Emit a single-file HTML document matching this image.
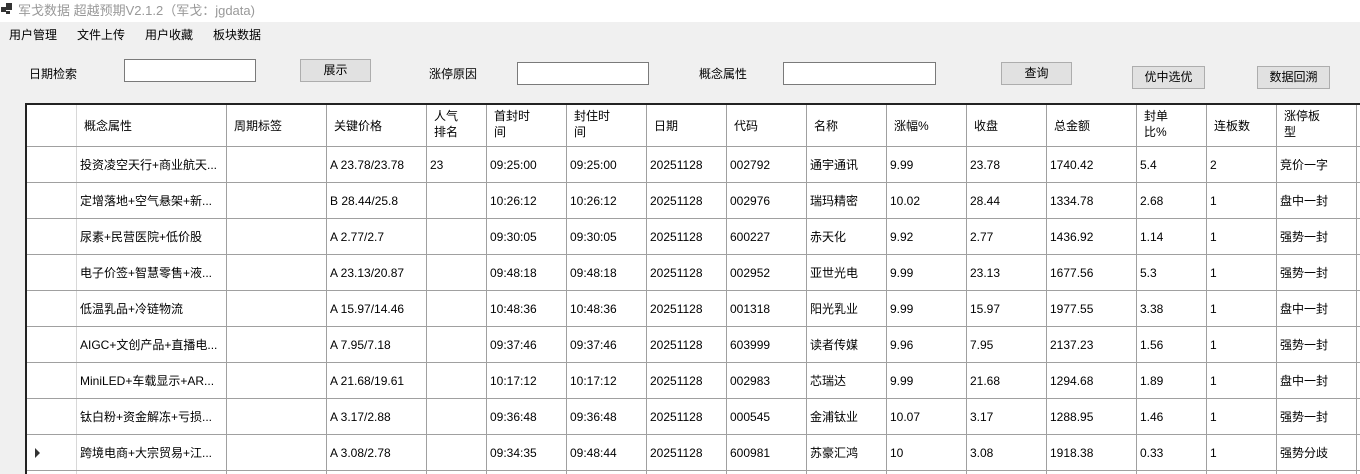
<!DOCTYPE html><html><head><meta charset="utf-8"><style>
*{margin:0;padding:0;box-sizing:border-box}
body{width:1360px;height:474px;overflow:hidden;background:#f0f0f0;font-family:"Liberation Sans","Noto Sans CJK SC",sans-serif;font-size:12px;color:#000;position:relative;line-height:16px}
.a{position:absolute;white-space:nowrap}
.tb{left:0;top:0;width:1360px;height:22px;background:#fff}
.in{background:#fff;border:1px solid #7a7a7a;height:23px}
.bt{background:#e1e1e1;border:1px solid #adadad;height:23px;text-align:center;line-height:21px}
.grid{left:25px;top:103px;width:1335px;height:371px;background:#fff;border-left:2px solid #222;border-top:2px solid #222;overflow:hidden}
.v{position:absolute;top:0;width:1px;height:371px;background:#a0a0a0}
.c{position:absolute;white-space:nowrap;font-size:12px;line-height:16px}
</style></head><body>
<div class="a tb"></div>
<div class="a" style="left:1px;top:7px;width:5px;height:5px;background:#333"></div>
<div class="a" style="left:6px;top:3px;width:6px;height:7px;background:#333"></div>
<div class="a" style="left:6px;top:11px;width:4px;height:3px;background:#333"></div>
<div class="a" style="left:18px;top:3px;color:#999;font-size:13px">军戈数据 超越预期V2.1.2（军戈：jgdata)</div>
<div class="a" style="left:9px;top:27px">用户管理</div>
<div class="a" style="left:77px;top:27px">文件上传</div>
<div class="a" style="left:145px;top:27px">用户收藏</div>
<div class="a" style="left:213px;top:27px">板块数据</div>
<div class="a" style="left:29px;top:66px">日期检索</div>
<div class="a in" style="left:124px;top:59px;width:132px"></div>
<div class="a bt" style="left:300px;top:59px;width:71px">展示</div>
<div class="a" style="left:429px;top:66px">涨停原因</div>
<div class="a in" style="left:517px;top:62px;width:132px"></div>
<div class="a" style="left:699px;top:66px">概念属性</div>
<div class="a in" style="left:783px;top:62px;width:153px"></div>
<div class="a bt" style="left:1001px;top:62px;width:71px">查询</div>
<div class="a bt" style="left:1132px;top:66px;width:73px">优中选优</div>
<div class="a bt" style="left:1257px;top:66px;width:73px">数据回溯</div>
<div class="a grid" id="g"></div>
<script>
var xs=[76,226,326,426,486,566,646,726,806,886,966,1046,1136,1206,1276,1356];
var hd=["概念属性","周期标签","关键价格","人气<br>排名","首封时<br>间","封住时<br>间","日期","代码","名称","涨幅%","收盘","总金额","封单<br>比%","连板数","涨停板<br>型"];
var rows=[
["投资凌空天行+商业航天...","","A 23.78/23.78","23","09:25:00","09:25:00","20251128","002792","通宇通讯","9.99","23.78","1740.42","5.4","2","竞价一字"],
["定增落地+空气悬架+新...","","B 28.44/25.8","","10:26:12","10:26:12","20251128","002976","瑞玛精密","10.02","28.44","1334.78","2.68","1","盘中一封"],
["尿素+民营医院+低价股","","A 2.77/2.7","","09:30:05","09:30:05","20251128","600227","赤天化","9.92","2.77","1436.92","1.14","1","强势一封"],
["电子价签+智慧零售+液...","","A 23.13/20.87","","09:48:18","09:48:18","20251128","002952","亚世光电","9.99","23.13","1677.56","5.3","1","强势一封"],
["低温乳品+冷链物流","","A 15.97/14.46","","10:48:36","10:48:36","20251128","001318","阳光乳业","9.99","15.97","1977.55","3.38","1","盘中一封"],
["AIGC+文创产品+直播电...","","A 7.95/7.18","","09:37:46","09:37:46","20251128","603999","读者传媒","9.96","7.95","2137.23","1.56","1","强势一封"],
["MiniLED+车载显示+AR...","","A 21.68/19.61","","10:17:12","10:17:12","20251128","002983","芯瑞达","9.99","21.68","1294.68","1.89","1","盘中一封"],
["钛白粉+资金解冻+亏损...","","A 3.17/2.88","","09:36:48","09:36:48","20251128","000545","金浦钛业","10.07","3.17","1288.95","1.46","1","强势一封"],
["跨境电商+大宗贸易+江...","","A 3.08/2.78","","09:34:35","09:48:44","20251128","600981","苏豪汇鸿","10","3.08","1918.38","0.33","1","强势分歧"]];
var h="",o=27;
for(var i=0;i<xs.length;i++){h+='<div class="v" style="left:'+(xs[i]-o)+'px;'+(i==0?'background:#d8d8d8':'')+'"></div>';}
for(var i=0;i<hd.length;i++){var two=hd[i].indexOf('<br>')>0;h+='<div class="c" style="left:'+(xs[i]-o+8)+'px;top:'+(two?3:13)+'px">'+hd[i]+'</div>';}
h+='<div style="position:absolute;left:0;top:41px;width:1340px;height:1px;background:#a0a0a0"></div>';
for(var r=0;r<rows.length;r++){var t=42+r*36;
 h+='<div style="position:absolute;left:0;top:'+(t+35)+'px;width:1340px;height:1px;background:#a0a0a0"></div>';
 for(var i=0;i<rows[r].length;i++)h+='<div class="c" style="left:'+(xs[i]-o+4)+'px;top:'+(t+10)+'px">'+rows[r][i]+'</div>';}
h+='<div style="position:absolute;left:8px;top:'+(42+8*36+13)+'px;width:0;height:0;border-left:5px solid #333;border-top:5px solid transparent;border-bottom:5px solid transparent"></div>';
document.getElementById('g').innerHTML=h;
</script>
</body></html>
